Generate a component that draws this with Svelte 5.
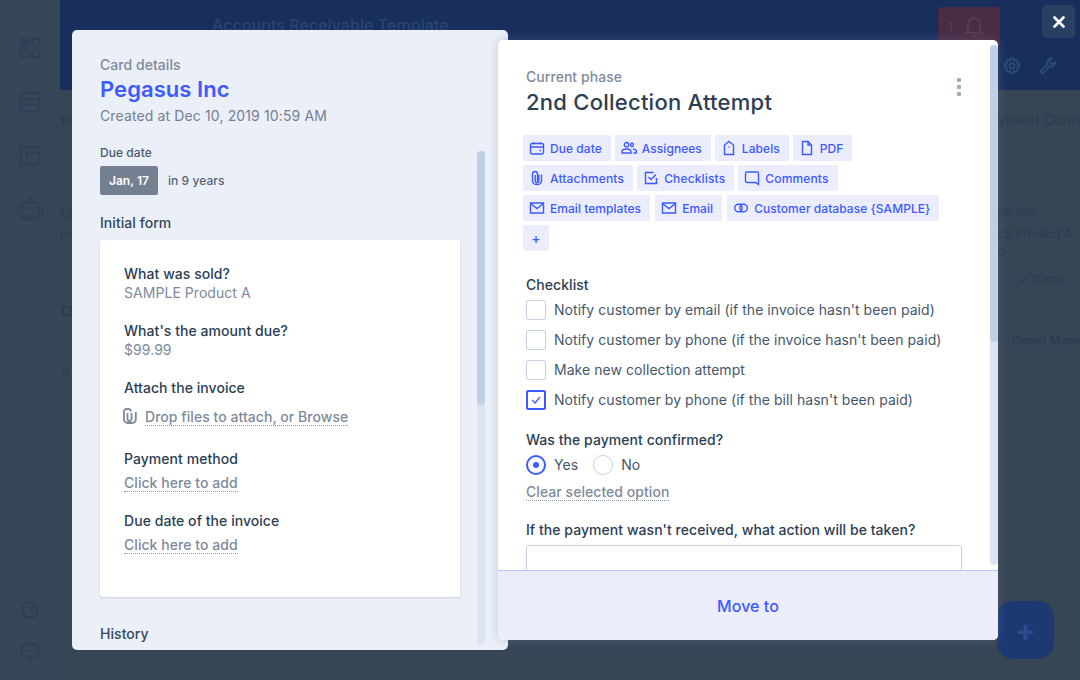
<script>
	const chipRows = [
		[
			{ icon: 'calendar', label: 'Due date' },
			{ icon: 'people', label: 'Assignees' },
			{ icon: 'tag', label: 'Labels' },
			{ icon: 'file', label: 'PDF' }
		],
		[
			{ icon: 'clip', label: 'Attachments' },
			{ icon: 'check', label: 'Checklists' },
			{ icon: 'comment', label: 'Comments' }
		],
		[
			{ icon: 'mail', label: 'Email templates' },
			{ icon: 'mail', label: 'Email' },
			{ icon: 'link', label: 'Customer database {SAMPLE}' }
		]
	];

	const iconPaths = {
		calendar: 'M3 3.500h10a1.500 1.500 0 0 1 1.500 1.500v7.500a1.500 1.500 0 0 1-1.500 1.500H3a1.500 1.500 0 0 1-1.500-1.500V5A1.500 1.500 0 0 1 3 3.500zM1.500 7h13M5 2v2.500M11 2v2.500M10.500 10.500h1.500',
		people: 'M5.500 2.500a2.200 2.200 0 1 0 0 4.400a2.200 2.200 0 0 0 0-4.400zM1 13v-1.500c0-1.500 1.800-2.500 4.500-2.500s4.500 1 4.500 2.500V13zM11 3a2 2 0 0 1 0 3.800a2 2 0 0 1 0-3.800zM12 9c2 .2 3.400 1 3.400 2.400V13h-3',
		tag: 'M8 1.500l4.500 3.500v9.500h-9V5zM7.500 7h1',
		file: 'M3.500 1.500h5.500l3.500 3.500v9.500h-9zM9 1.500V5h3.500',
		clip: 'M12.500 4.500v6.500a4 4 0 0 1-4 3.500h-1A4 4 0 0 1 3.500 11V4a2.500 2.500 0 0 1 5 0v7a1 1 0 0 0 .5 .8M6.200 5v6a1.800 1.800 0 0 0 3.600 0V4.500',
		check: 'M13.500 8v5.500H2.500v-11h8M5.500 7l2.500 2.500 5-5',
		comment: 'M3 2h10a1.500 1.500 0 0 1 1.500 1.500v11l-3-2H3A1.500 1.500 0 0 1 1.500 11V3.500A1.500 1.500 0 0 1 3 2z',
		mail: 'M1.500 3h13v10h-13zM1.500 3.500L8 8.500l6.500-5',
		link: 'M5.500 4.200a3.800 3.800 0 1 0 0 7.600h5a3.800 3.800 0 1 0 0-7.600zM8 5.200a3.800 3.800 0 0 1 0 5.600M8 5.200a3.800 3.800 0 0 0 0 5.600'
	};

	const checklist = [
		{ label: "Notify customer by email (if the invoice hasn't been paid)", checked: false },
		{ label: "Notify customer by phone (if the invoice hasn't been paid)", checked: false },
		{ label: 'Make new collection attempt', checked: false },
		{ label: "Notify customer by phone (if the bill hasn't been paid)", checked: true }
	];
</script>

<div class="app">
	<nav class="rail">
		<div class="rail-top">
			<svg width="22" height="22" viewBox="0 0 26 26"><rect x="1" y="1" width="10.500" height="10.500" rx="3" class="solid" /><rect x="15" y="2" width="9" height="9" rx="2.500" /><rect x="2" y="15" width="9" height="9" rx="2.500" /><rect x="15" y="15" width="9" height="9" rx="2.500" /></svg>
			<svg width="22" height="22" viewBox="0 0 26 26"><rect x="2" y="2" width="22" height="22" rx="4" /><path d="M2 9.500h22M2 16.500h22M6.500 13h1.500M6.500 20.500h1.500" /></svg>
			<svg width="22" height="22" viewBox="0 0 26 26"><rect x="2" y="3" width="22" height="20" rx="1.500" /><path d="M9 3v20M9 9h15" /></svg>
			<svg class="robot" width="28" height="26" viewBox="0 0 28 26">
				<rect x="5.500" y="6.500" width="17" height="17" rx="3.500" />
				<circle cx="14" cy="3" r="2.500" class="solid" />
				<rect x="0.500" y="11" width="2.500" height="8" rx="1" class="solid" />
				<rect x="25" y="11" width="2.500" height="8" rx="1" class="solid" />
				<rect x="9.500" y="11" width="2" height="2" class="solid" />
				<rect x="16.500" y="11" width="2" height="2" class="solid" />
				<path d="M10 24v-5h8v5z" class="solid" />
			</svg>
		</div>
		<div class="rail-bottom">
			<svg width="18" height="18" viewBox="0 0 20 20"><circle cx="10" cy="10" r="8.500" /><path d="M7.800 8a2.200 2.200 0 1 1 3.300 1.900c-.7.400-1.100.8-1.100 1.600M10 14v.5" /></svg>
			<svg width="20" height="20" viewBox="0 0 22 22"><path d="M6 2.500h10a4.500 4.500 0 0 1 4.500 4.500v4a4.500 4.500 0 0 1-4.500 4.500h-2l-2.500 4-1.500-4H6A4.500 4.500 0 0 1 1.500 11V7A4.500 4.500 0 0 1 6 2.500z" /><path d="M7 9h1M10.500 9h1M14 9h1" /></svg>
		</div>
	</nav>

	<div class="main">
		<header class="top">
			<div class="top-row">
				<span class="pipe-name">Accounts Receivable Template</span>
				<span class="alert">1
					<svg width="18" height="22" viewBox="0 0 18 22"><path d="M3 15V8a6 6 0 0 1 12 0v7l2 2H1zM7.500 20h3" /></svg>
				</span>
			</div>
			<div class="top-tools">
				<svg width="18" height="18" viewBox="0 0 18 18"><circle cx="9" cy="9" r="2.500" /><path d="M7.500 1.500h3l.5 2.200 2-.9 2 2-.9 2 2.200.5v3l-2.200.5.9 2-2 2-2-.9-.5 2.200h-3l-.5-2.200-2 .9-2-2 .9-2-2.200-.5v-3l2.200-.5-.9-2 2-2 2 .9z" /></svg>
				<svg width="18" height="18" viewBox="0 0 18 18"><path d="M16.500 5a4.500 4.500 0 0 1-6 4.200l-6 6.300a1.500 1.500 0 0 1-2.200-2.200l6.200-6a4.500 4.500 0 0 1 4.700-6l-2.500 2.500.5 2.500 2.500.5z" /></svg>
			</div>
		</header>
		<div class="board">
			<div class="col left-col">
				<span class="col-title">Collection</span>
				<span class="card-name">LLC</span>
				<span class="card-sub">Product</span>
				<span class="card-mark"></span>
				<span class="card-sub low">o</span>
			</div>
			<div class="col right-col">
				<span class="col-title pay">Payment Confirmed</span>
				<span class="card-name days">Days Inc</span>
				<span class="card-sub sample">SAMPLE Product A</span>
				<span class="card-sub amount">$99.90</span>
				<span class="card-time">✓ 10min</span>
				<span class="card-done">Done! Money received</span>
			</div>
		</div>
	</div>

	<button class="fab">+</button>
	<button class="close" aria-label="Close">
		<svg width="12" height="12" viewBox="0 0 12 12"><path d="M1.500 1.500l9 9M10.500 1.500l-9 9" /></svg>
	</button>

	<section class="details">
		<div class="details-head">
			<p class="eyebrow">Card details</p>
			<h1>Pegasus Inc</h1>
			<p class="created">Created at Dec 10, 2019 10:59 AM</p>
			<p class="due-label">Due date</p>
			<div class="due-row">
				<span class="due-badge">Jan, 17</span>
				<span class="due-rel">in 9 years</span>
			</div>
			<h3>Initial form</h3>
		</div>
		<div class="form-card">
			<div class="field">
				<h4>What was sold?</h4>
				<p class="value">SAMPLE Product A</p>
			</div>
			<div class="field">
				<h4>What's the amount due?</h4>
				<p class="value">$99.99</p>
			</div>
			<div class="field attach-field">
				<h4>Attach the invoice</h4>
				<div class="attach">
					<svg width="14" height="16" viewBox="0 0 14 16"><path d="M12.800 4v7.500a3.500 3.500 0 0 1-3.500 3.500H4.500A3.500 3.500 0 0 1 1 11.500V3.500a2.500 2.500 0 0 1 2.500-2.500h2A2.500 2.500 0 0 1 8 3.500M4.500 5v6a2 2 0 0 0 4 0V5" /></svg>
					<span class="add">Drop files to attach, or Browse</span>
				</div>
			</div>
			<div class="field tight">
				<h4>Payment method</h4>
				<span class="add">Click here to add</span>
			</div>
			<div class="field tight">
				<h4>Due date of the invoice</h4>
				<span class="add">Click here to add</span>
			</div>
		</div>
		<h3 class="history">History</h3>
		<div class="track left-track"><div class="thumb"></div></div>
	</section>

	<section class="phase">
		<div class="phase-body">
			<div class="phase-head">
				<div>
					<p class="eyebrow">Current phase</p>
					<h2>2nd Collection Attempt</h2>
				</div>
				<span class="dots"><i></i><i></i><i></i></span>
			</div>
			<div class="chips">
				{#each chipRows as row}
					<div class="chip-row">
						{#each row as chip}
							<span class="chip">
								<svg width="16" height="16" viewBox="0 0 16 16"><path d={iconPaths[chip.icon]} /></svg>
								{chip.label}
							</span>
						{/each}
					</div>
				{/each}
				<div class="chip-row"><span class="chip plus">+</span></div>
			</div>

			<h4 class="check-title">Checklist</h4>
			<div class="checks">
				{#each checklist as item}
					<div class="check-row">
						<span class={['box', item.checked && 'on']}>
							{#if item.checked}
								<svg width="10" height="8" viewBox="0 0 10 8"><path d="M1 4l3 3 5-6" /></svg>
							{/if}
						</span>
						{item.label}
					</div>
				{/each}
			</div>

			<h4 class="radio-title">Was the payment confirmed?</h4>
			<div class="radios">
				<span class="radio-opt"><span class="radio on"></span>Yes</span>
				<span class="radio-opt"><span class="radio"></span>No</span>
			</div>
			<span class="add clear">Clear selected option</span>

			<h4 class="action-title">If the payment wasn't received, what action will be taken?</h4>
			<div class="textbox"></div>
		</div>
		<div class="track right-track"><div class="thumb"></div></div>
		<footer class="move">Move to</footer>
	</section>
</div>

<style>
	:global(body) {
		margin: 0;
		background: #364656;
		font-family: Inter, "Liberation Sans", sans-serif;
		letter-spacing: 0.05px;
	}

	p,
	h1,
	h2,
	h3,
	h4 {
		margin: 0;
	}

	.app {
		position: relative;
		width: 1080px;
		height: 680px;
		display: flex;
		overflow: hidden;
		background: #374655;
	}

	.rail {
		width: 60px;
		flex: none;
		display: flex;
		flex-direction: column;
		justify-content: space-between;
		align-items: center;
		padding: 37px 0 18px;
		box-sizing: border-box;
		background: #364757;
	}

	.rail svg,
	.top svg {
		fill: none;
		stroke: #2d4058;
		stroke-width: 2.500;
	}

	.rail svg .solid {
		fill: #2d4058;
		stroke: none;
	}

	.rail-top {
		display: flex;
		flex-direction: column;
		align-items: center;
		gap: 32px;
	}

	.robot {
		margin-top: -3px;
	}

	.rail-bottom {
		display: flex;
		flex-direction: column;
		align-items: center;
		gap: 23px;
	}

	.main {
		flex: 1;
		min-width: 0;
		display: flex;
		flex-direction: column;
	}

	.top {
		height: 90px;
		flex: none;
		background: #182f5d;
		box-sizing: border-box;
		position: relative;
	}

	.top-row {
		display: flex;
		align-items: flex-start;
		padding: 7px 0 0 152px;
	}

	.pipe-name {
		color: #2b4373;
		font-size: 16px;
		font-weight: 500;
		line-height: 36px;
		width: 726px;
	}

	.alert {
		display: flex;
		align-items: center;
		gap: 12px;
		width: 62px;
		height: 40px;
		box-sizing: border-box;
		padding-left: 10px;
		border-radius: 3px;
		background: #4a2c44;
		color: #5c3a4e;
		font-size: 13px;
	}

	.top .alert svg {
		stroke: #5c3a4e;
		stroke-width: 2;
	}

	.top-tools {
		position: absolute;
		right: 23px;
		top: 57px;
		display: flex;
		gap: 18px;
	}

	.top .top-tools svg {
		stroke: #2d4a78;
		stroke-width: 1.800;
	}

	.board {
		flex: 1;
		min-height: 0;
		display: flex;
		overflow: hidden;
		color: #2a3d52;
		font-size: 14px;
		font-weight: 500;
	}

	.col {
		display: flex;
		flex-direction: column;
		white-space: nowrap;
		flex: none;
	}

	.left-col {
		width: 120px;
		margin-left: -42px;
		padding-top: 21px;
	}

	.left-col .card-name {
		margin-left: 42px;
	}

	.left-col .card-sub {
		margin-left: 34px;
	}

	.card-mark {
		width: 10px;
		height: 10px;
		box-sizing: border-box;
		margin: 63px 0 0 44px;
		border: 2px solid #2a3d52;
		border-radius: 2px;
	}

	.left-col .low {
		margin: 46px 0 0 44px;
	}

	.right-col {
		margin-left: 814px;
		padding-top: 21px;
	}

	.col-title {
		line-height: 18px;
		color: #2a3d52;
	}

	.pay {
		margin-left: 29px;
	}

	.card-name {
		margin-top: 74px;
		line-height: 18px;
		font-weight: 600;
		color: #2c3f54;
	}

	.days {
		margin-left: 26px;
	}

	.card-sub {
		margin-top: 4px;
		line-height: 18px;
		font-size: 12px;
		font-weight: 500;
	}

	.sample {
		margin-left: 11px;
	}

	.card-sub.amount {
		margin: 1px 0 0 12px;
	}

	.card-time {
		margin: 8px 0 0 66px;
		font-size: 12px;
		line-height: 18px;
	}

	.card-done {
		margin: 44px 0 0 60px;
		font-size: 12px;
		line-height: 18px;
		font-weight: 600;
	}

	.fab {
		position: absolute;
		left: 997px;
		top: 601px;
		width: 57px;
		height: 58px;
		border: none;
		border-radius: 16px;
		background: #1c3972;
		color: #2b4c8e;
		font: 700 30px Inter, sans-serif;
		padding: 0;
	}

	.close {
		position: absolute;
		left: 1042px;
		top: 5px;
		width: 33px;
		height: 33px;
		border: none;
		border-radius: 5px;
		background: #2a4063;
		display: flex;
		align-items: center;
		justify-content: center;
		padding: 0;
	}

	.close svg {
		fill: none;
		stroke: #fff;
		stroke-width: 2.600;
		stroke-linecap: round;
	}

	.details {
		position: absolute;
		left: 72px;
		top: 30px;
		width: 436px;
		height: 620px;
		box-sizing: border-box;
		padding: 26px 0 0 28px;
		background: #ebf0f8;
		border-radius: 5px;
		overflow: hidden;
		color: #2c3e52;
	}

	.eyebrow {
		font-size: 14px;
		line-height: 18px;
		color: #7e8a9a;
		font-weight: 500;
	}

	h1 {
		font-size: 22px;
		line-height: 30px;
		font-weight: 600;
		color: #3d5afe;
	}

	.created {
		font-size: 14px;
		line-height: 20px;
		color: #748091;
		margin-top: 2px;
		letter-spacing: 0.125px;
	}

	.due-label {
		margin-top: 18px;
		font-size: 12px;
		line-height: 18px;
		font-weight: 500;
		color: #495a6d;
	}

	.due-row {
		display: flex;
		align-items: center;
		gap: 10px;
		margin-top: 4px;
	}

	.due-badge {
		width: 58px;
		height: 29px;
		border-radius: 2px;
		background: #748091;
		color: #fff;
		font-size: 12px;
		font-weight: 600;
		display: flex;
		align-items: center;
		justify-content: center;
	}

	.due-rel {
		font-size: 12px;
		color: #566577;
		font-weight: 500;
	}

	h3 {
		font-size: 14px;
		font-weight: 500;
		line-height: 20px;
		color: #36475a;
	}

	.details-head h3 {
		margin-top: 18px;
	}

	.form-card {
		width: 360px;
		height: 357px;
		box-sizing: border-box;
		margin-top: 7px;
		padding: 24px 24px 0;
		background: #fff;
		border-radius: 3px 0 0 3px;
		box-shadow: 0 1px 2px rgba(60, 80, 110, 0.2);
	}

	.field {
		margin-bottom: 19px;
	}

	.field.attach-field {
		margin-bottom: 23px;
	}

	.field.tight {
		margin-bottom: 19px;
	}

	h4 {
		font-size: 14px;
		font-weight: 500;
		line-height: 19px;
		color: #2c3e52;
	}

	.value {
		font-size: 14px;
		line-height: 19px;
		color: #7e8a9a;
	}

	.add {
		display: inline-block;
		font-size: 14px;
		font-weight: 500;
		line-height: 17px;
		color: #7e8a9a;
		border-bottom: 1px dotted #8c97a5;
		margin-top: 6px;
	}

	.attach {
		display: flex;
		align-items: center;
		gap: 8px;
		margin-top: 8px;
		margin-left: -1px;
	}

	.attach svg {
		fill: none;
		stroke: #7e8a9a;
		stroke-width: 1.800;
		flex: none;
	}

	.attach .add {
		margin-top: 3px;
	}

	.history {
		margin-top: 27px;
	}

	.track {
		position: absolute;
		width: 8px;
		border-radius: 4px;
		background: #dbe4f2;
	}

	.thumb {
		border-radius: 4px;
		background: #bfd0e6;
	}

	.left-track {
		left: 405px;
		top: 121px;
		height: 494px;
	}

	.left-track .thumb {
		height: 254px;
	}

	.phase {
		position: absolute;
		left: 498px;
		top: 40px;
		width: 500px;
		height: 600px;
		display: flex;
		flex-direction: column;
		background: #fff;
		border-radius: 5px;
		overflow: hidden;
		box-shadow: 0 0 10px 1px rgba(110, 130, 170, 0.3);
	}

	.phase-body {
		flex: 1;
		min-height: 0;
		overflow: hidden;
		padding: 28px 36px 0 28px;
	}

	.phase-head {
		display: flex;
		justify-content: space-between;
		align-items: flex-start;
	}

	h2 {
		font-size: 22px;
		font-weight: 500;
		line-height: 32px;
		color: #2c3e52;
		letter-spacing: 0.25px;
	}

	.dots {
		display: flex;
		flex-direction: column;
		gap: 3px;
		margin-top: 10px;
		transform: translateX(-1px);
	}

	.dots i {
		width: 4px;
		height: 4px;
		border-radius: 1px;
		background: #a3adba;
	}

	.chips {
		display: flex;
		flex-direction: column;
		gap: 4px;
		margin: 17px 0 0 -3px;
	}

	.chip-row {
		display: flex;
		gap: 4px;
	}

	.chip-row:nth-child(2) {
		letter-spacing: 0.15px;
	}

	.chip-row:nth-child(3) {
		gap: 5px;
	}

	.chip {
		display: flex;
		align-items: center;
		gap: 5px;
		height: 26px;
		box-sizing: border-box;
		padding: 0 9px 0 6px;
		border-radius: 2px;
		background: #ebedfd;
		color: #3d5afe;
		font-size: 12px;
		font-weight: 500;
		white-space: nowrap;
	}

	.chip svg {
		fill: none;
		stroke: #3d5afe;
		stroke-width: 1.400;
		flex: none;
	}

	.chip.plus {
		width: 26px;
		padding: 0;
		justify-content: center;
		font-size: 14px;
	}

	.check-title {
		margin-top: 24px;
	}

	.checks {
		display: flex;
		flex-direction: column;
		gap: 10px;
		margin-top: 6px;
	}

	.check-row {
		display: flex;
		align-items: center;
		gap: 8px;
		height: 20px;
		font-size: 14px;
		line-height: 20px;
		color: #46576a;
		white-space: nowrap;
	}

	.box {
		width: 20px;
		height: 20px;
		box-sizing: border-box;
		flex: none;
		border: 1px solid #c5d1e4;
		border-radius: 2px;
		display: flex;
		align-items: center;
		justify-content: center;
	}

	.box.on {
		border: 2px solid #3d5afe;
	}

	.box svg {
		fill: none;
		stroke: #3d5afe;
		stroke-width: 1.200;
	}

	.radio-title {
		margin-top: 20px;
	}

	.radios {
		display: flex;
		gap: 15px;
		margin-top: 6px;
	}

	.radio-opt {
		display: flex;
		align-items: center;
		gap: 8px;
		font-size: 14px;
		line-height: 20px;
		color: #46576a;
	}

	.radio {
		width: 20px;
		height: 20px;
		box-sizing: border-box;
		border-radius: 50%;
		border: 1px solid #c5d1e4;
		display: flex;
		align-items: center;
		justify-content: center;
	}

	.radio.on {
		border: 2px solid #3d5afe;
	}

	.radio.on::after {
		content: '';
		width: 6px;
		height: 6px;
		border-radius: 50%;
		background: #3d5afe;
	}

	.clear {
		margin-top: 8px;
		display: table;
	}

	.action-title {
		margin-top: 19px;
	}

	.textbox {
		height: 50px;
		margin-top: 6px;
		border: 1px solid #c5d1e4;
		border-radius: 3px;
		box-sizing: border-box;
	}

	.right-track {
		left: 492px;
		top: 5px;
		height: 520px;
	}

	.right-track .thumb {
		height: 297px;
	}

	.move {
		flex: none;
		height: 70px;
		box-sizing: border-box;
		border-top: 1px solid #b9c5f5;
		background: #ebedfd;
		color: #3d5afe;
		font-size: 16px;
		font-weight: 500;
		display: flex;
		align-items: center;
		justify-content: center;
	}
</style>
